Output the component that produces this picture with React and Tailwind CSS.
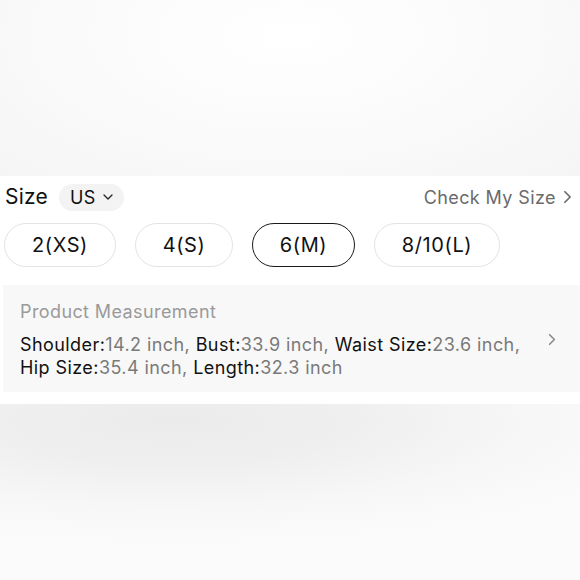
import React from "react";

const sizes = [
  { label: "2(XS)", w: "w-[112px]" },
  { label: "4(S)", w: "w-[98px]" },
  { label: "6(M)", w: "w-[103px]", active: true },
  { label: "8/10(L)", w: "w-[126px]" },
];

const measures = [
  ["Shoulder", "14.2 inch"],
  ["Bust", "33.9 inch"],
  ["Waist Size", "23.6 inch"],
  ["Hip Size", "35.4 inch"],
  ["Length", "32.3 inch"],
];

const Chevron = ({ className }) => (
  <svg viewBox="0 0 10 16" className={className} fill="none" stroke="currentColor" strokeWidth="2" strokeLinecap="round" strokeLinejoin="round">
    <path d="M2 2l6 6-6 6" />
  </svg>
);

export default function App() {
  return (
    <div
      className="w-[580px] h-[580px] flex flex-col overflow-hidden bg-white"
      style={{ fontFamily: "Inter, 'Noto Sans', sans-serif" }}
    >
      {/* blurred backdrop above */}
      <div className="h-[176px] shrink-0 bg-[radial-gradient(ellipse_at_50%_20%,#ffffff_0%,#fafafa_55%,#f5f5f5_100%)]" />

      {/* size card */}
      <div className="h-[228px] shrink-0 bg-white pl-[4px] flex flex-col">
        {/* header */}
        <div className="flex items-center justify-between pt-[7px] h-[35px] pr-[8px]">
          <div className="flex items-center gap-[11px]">
            <span className="text-[21px] text-[#111] pl-[1px] tracking-[0.2px]">Size</span>
            <div className="h-[27px] w-[65px] rounded-full bg-[#f3f3f3] flex items-center justify-center gap-[7px]">
              <span className="text-[18px] text-[#111] tracking-[0.4px]">US</span>
              <svg viewBox="0 0 10 6" className="w-[10px] h-[6px] text-[#222]" fill="none" stroke="currentColor" strokeWidth="1.3" strokeLinecap="round" strokeLinejoin="round">
                <path d="M1 1l4 4 4-4" />
              </svg>
            </div>
          </div>
          <div className="flex items-center gap-[7px] text-[#6b6b6b]">
            <span className="text-[18px] tracking-[0.4px]">Check My Size</span>
            <Chevron className="w-[9px] h-[14px]" />
          </div>
        </div>

        {/* size options */}
        <div className="flex gap-[19px] mt-[12px]">
          {sizes.map((s) => (
            <div
              key={s.label}
              className={`${s.w} h-[44px] rounded-full flex items-center justify-center text-[20px] tracking-[0.6px] text-[#111] ${
                s.active ? "border-[1.5px] border-[#1a1a1a]" : "border border-[#e3e3e3]"
              }`}
            >
              {s.label}
            </div>
          ))}
        </div>

        {/* measurement */}
        <div className="mt-[18px] ml-[-1px] h-[107px] bg-[#f8f8f8] pl-[17px] pr-[24px] pt-[16px] flex items-center">
          <div className="flex-1 self-start">
            <p className="text-[18px] leading-[22px] tracking-[0.4px] text-[#9a9a9a]">Product Measurement</p>
            <p className="mt-[10px] text-[18px] leading-[23px] tracking-[0.42px] text-[#111] w-[515px]">
              {measures.map(([k, v], i) => (
                <span key={k}>
                  {k}:<span className="text-[#7a7a7a]">{v}{i < measures.length - 1 ? ", " : ""}</span>
                </span>
              ))}
            </p>
          </div>
          <Chevron className="w-[8px] h-[13px] text-[#8a8a8a] mt-[-14px]" />
        </div>
      </div>

      {/* blurred backdrop below */}
      <div className="flex-1 bg-[radial-gradient(ellipse_90%_70%_at_30%_10%,#ebebeb_0%,#efefef_35%,#f7f7f7_70%,#fbfbfb_100%)]" />
    </div>
  );
}
